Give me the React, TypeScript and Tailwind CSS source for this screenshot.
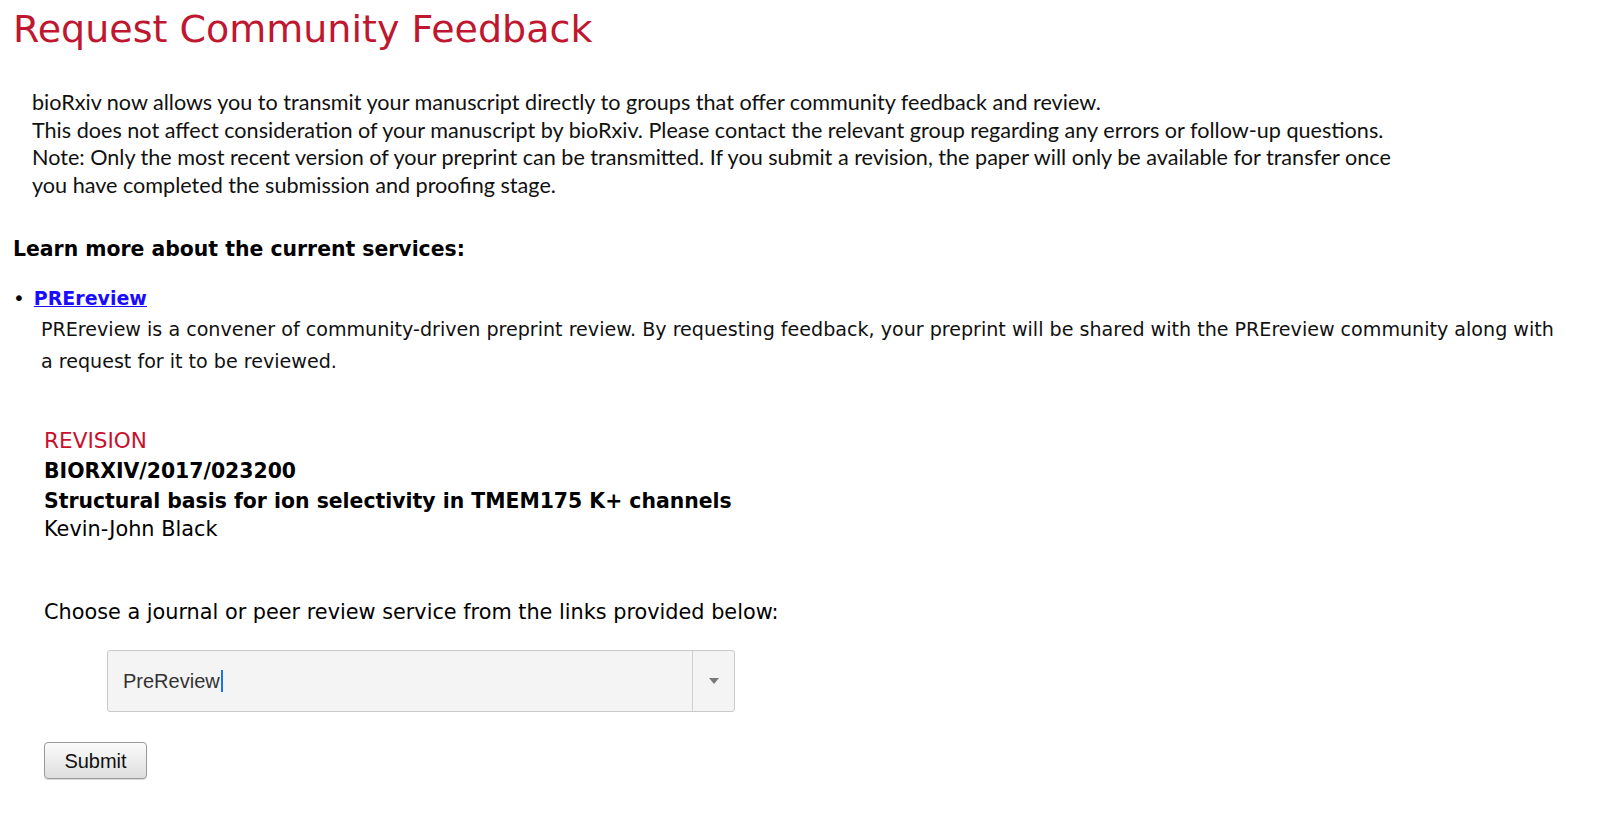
export default function App() {
  return (
    <div className="min-h-screen bg-white text-black">
      <h1 className="pl-[13px] pt-[6px] text-[38px] leading-[46px] text-[#bf1730] font-['DejaVu_Sans',sans-serif]">
        Request Community Feedback
      </h1>

      <div className="mt-[37px] pl-[32px] text-[21.6px] leading-[27.5px] font-['Lato',sans-serif] text-[#111]">
        <p>bioRxiv now allows you to transmit your manuscript directly to groups that offer community feedback and review.</p>
        <p>This does not affect consideration of your manuscript by bioRxiv. Please contact the relevant group regarding any errors or follow-up questions.</p>
        <p>
          Note: Only the most recent version of your preprint can be transmitted. If you submit a revision, the paper will only be available for transfer once
          <br />
          you have completed the submission and proofing stage.
        </p>
      </div>

      <div className="font-['DejaVu_Sans',sans-serif]">
        <h2 className="mt-[38px] pl-[13px] text-[20.4px] font-bold leading-[24px]">
          Learn more about the current services:
        </h2>

        <ul className="mt-[25px] pl-[13px]">
          <li className="flex flex-col">
            <div className="flex items-center gap-[9px] text-[19px] leading-[24px]">
              <span className="text-[20px]">•</span>
              <a href="#" className="font-bold text-[#1a0dff] underline">
                PREreview
              </a>
            </div>
            <p className="mt-[4px] pl-[28px] pr-[20px] text-[19.1px] leading-[32px] text-[#111]">
              PREreview is a convener of community-driven preprint review. By requesting feedback, your preprint will be shared with the PREreview community along with
              <br />
              a request for it to be reviewed.
            </p>
          </li>
        </ul>

        <div className="mt-[48px] pl-[44px] text-[21px] leading-[30px]">
          <div className="text-[21.6px] text-[#c8102e]">REVISION</div>
          <div className="text-[20.4px] font-bold">BIORXIV/2017/023200</div>
          <div className="text-[20.4px] font-bold">Structural basis for ion selectivity in TMEM175 K+ channels</div>
          <div className="text-[20.8px] leading-[26px]">Kevin-John Black</div>

          <p className="mt-[57px] text-[20.8px] leading-[26px]">
            Choose a journal or peer review service from the links provided below:
          </p>
        </div>

        <div className="mt-[25px] pl-[107px]">
          <div className="flex h-[62px] w-[628px] rounded-[3px] border border-[#c9c9c9] bg-[#f4f4f4]">
            <div className="flex flex-1 items-center pl-[15px] text-[20px] text-[#333] font-['Liberation_Sans',sans-serif]">
              PreReview
              <span className="ml-[1px] inline-block h-[22px] w-[2px] bg-[#1a73e8]" />
            </div>
            <div className="flex w-[42px] items-center justify-center border-l border-[#d0d0d0]">
              <svg width="10" height="6" viewBox="0 0 10 6">
                <path d="M0 0 L10 0 L5 6 Z" fill="#7a7a7a" />
              </svg>
            </div>
          </div>
        </div>

        <div className="mt-[30px] pl-[44px]">
          <button className="h-[37px] w-[103px] rounded-[4px] border border-[#9a9a9a] bg-gradient-to-b from-[#fbfbfb] to-[#dedede] text-[20px] text-[#111] font-['Liberation_Sans',sans-serif] shadow-[0_1px_1px_rgba(0,0,0,0.15)]">
            Submit
          </button>
        </div>
      </div>
    </div>
  );
}
